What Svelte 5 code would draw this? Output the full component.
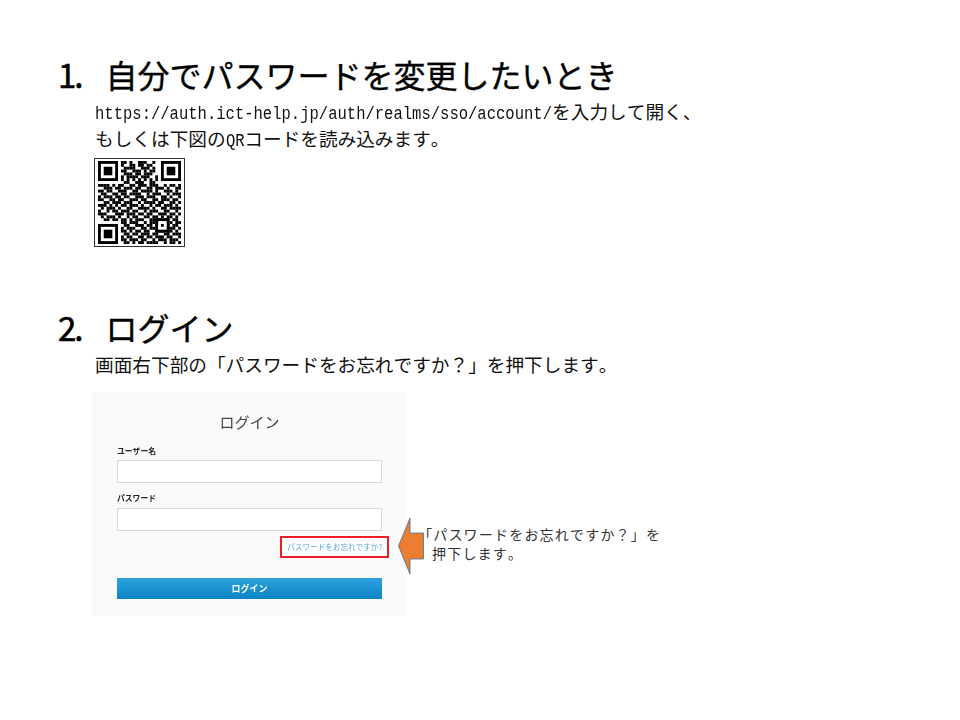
<script>
  const raw = [
    "00000000110100111001000000000",
    "00000000100110110110000000000",
    "00000000011110011101000000000",
    "00000000110011101011000000000",
    "00000000011101101110000000000",
    "00000000101111011100100000000",
    "00000000101010101010100000000",
    "00000000011001110011000000000",
    "11110101100110111011100101101",
    "00111011011101100110111010011",
    "11011001110011011110100111010",
    "01100110110111100101110010111",
    "10111011011001110111001101001",
    "11001101100111011001101110110",
    "00110111011100101111011001101",
    "11101010110111010010110111010",
    "01011101001100111101001101111",
    "10010110111011001011100110010",
    "11100011101110110110011101101",
    "01011101001011001101101011010",
    "00110110110101110011110110110",
    "00000000110111001011011001011",
    "00000000011001110110110110110",
    "00000000101110011011010011101",
    "00000000110101101100111011010",
    "00000000011011011101100110111",
    "00000000101100110110111011001",
    "00000000110111011001011101110",
    "00000000011010110111100101101"
  ];
  const finders = [[0, 0], [22, 0], [0, 22]];
  const cells = [];
  raw.forEach((row, y) => {
    [...row].forEach((c, x) => {
      if (c === "1") cells.push({ x, y });
    });
  });
</script>

<div class="page">
  <section class="first">
    <h1><span class="num">1.</span>自分でパスワードを変更したいとき</h1>
    <div class="body">
      <p><span class="latin url">https://auth.ict-help.jp/auth/realms/sso/account/</span>を入力して開く、</p>
      <p>もしくは下図の<span class="latin code">QR</span>コードを読み込みます。</p>
      <div class="qr">
        <svg width="83" height="83" viewBox="0 0 29 29">
          {#each cells as c}
            <rect x={c.x} y={c.y} width="1.02" height="1.02" fill="#000" />
          {/each}
          {#each finders as f}
            <rect x={f[0] - (f[0] ? 1 : 0)} y={f[1] - (f[1] ? 1 : 0)} width="8" height="8" fill="#fff" />
            <rect x={f[0]} y={f[1]} width="7" height="7" fill="#000" />
            <rect x={f[0] + 1} y={f[1] + 1} width="5" height="5" fill="#fff" />
            <rect x={f[0] + 2} y={f[1] + 2} width="3" height="3" fill="#000" />
          {/each}
          <rect x="20" y="20" width="5" height="5" fill="#000" />
          <rect x="21" y="21" width="3" height="3" fill="#fff" />
          <rect x="22" y="22" width="1" height="1" fill="#000" />
        </svg>
      </div>
    </div>
  </section>

  <section class="second">
    <h1><span class="num">2.</span>ログイン</h1>
    <div class="body">
      <p>画面右下部の「パスワードをお忘れですか？」を押下します。</p>
    </div>
    <div class="figure">
      <div class="shot">
        <div class="title">ログイン</div>
        <div class="label">ユーザー名</div>
        <div class="input"></div>
        <div class="label second-label">パスワード</div>
        <div class="input"></div>
        <div class="forgot-row">
          <div class="forgot">パスワードをお忘れですか?</div>
        </div>
        <div class="button">ログイン</div>
      </div>
      <svg class="arrow" width="28" height="60" viewBox="0 0 28 60">
        <path d="M1.5 29 L13 1 L13 16 L26.5 16 L26.5 42 L13 42 L13 57 Z" fill="#ed7d31" stroke="#41719c" stroke-width="0.8" />
      </svg>
      <div class="note">
        <div>「パスワードをお忘れですか？」を</div>
        <div class="indent">押下します。</div>
      </div>
    </div>
  </section>
</div>

<style>
  :global(body) {
    margin: 0;
    background: #fff;
  }
  .page {
    width: 960px;
    height: 720px;
    box-sizing: border-box;
    padding: 54px 0 0 58px;
    overflow: hidden;
    color: #000;
    font-family: "Noto Sans CJK JP", "Liberation Sans", sans-serif;
    font-kerning: none;
  }
  h1 {
    margin: 0;
    display: flex;
    font-size: 32px;
    line-height: 40px;
    font-weight: 400;
    color: #000;
    -webkit-text-stroke: 0.35px #000;
  }
  .num {
    width: 47.5px;
    font-size: 33px;
    letter-spacing: -2px;
    -webkit-text-stroke: 0.6px #000;
  }
  .body {
    margin: 3px 0 0 37px;
  }
  p {
    margin: 0;
    font-size: 18.67px;
    line-height: 27px;
    white-space: nowrap;
    color: #111;
  }
  .latin {
    display: inline-block;
    font-family: "Liberation Mono", monospace;
    line-height: 1;
    transform: scaleX(0.833);
    transform-origin: left;
  }
  .url {
    margin-right: -91.5px;
  }
  .code {
    margin-right: -3.74px;
  }
  .qr {
    width: 91px;
    height: 89px;
    margin: 7px 0 0 -1px;
    box-sizing: border-box;
    border: 1px solid #333;
    display: flex;
    align-items: center;
    justify-content: center;
  }
  .qr svg {
    filter: blur(0.4px);
  }
  .second {
    margin-top: 60px;
  }
  .figure {
    position: relative;
    margin: 15px 0 0 34px;
    width: 315px;
  }
  .shot {
    width: 315px;
    height: 224px;
    box-sizing: border-box;
    padding: 19px 25px 0;
    background: #fafafa;
    filter: blur(0.4px);
  }
  .title {
    text-align: center;
    font-size: 15px;
    line-height: 22px;
    color: #444;
  }
  .label {
    margin-top: 12px;
    font-size: 7.8px;
    line-height: 12px;
    font-weight: 700;
    color: #222;
  }
  .second-label {
    margin-top: 9px;
  }
  .input {
    margin-top: 3px;
    height: 23px;
    box-sizing: border-box;
    background: #fff;
    border: 1px solid #d9d9d9;
  }
  .second-label + .input {
    margin-top: 4px;
  }
  .forgot-row {
    display: flex;
    justify-content: flex-end;
    margin: 5px -7px 0 0;
  }
  .forgot {
    width: 109px;
    height: 22px;
    box-sizing: border-box;
    border: 2px solid #ee1c25;
    background: #fff;
    padding-right: 5px;
    text-align: right;
    font-size: 7.6px;
    line-height: 18px;
    color: #5aa8dc;
    white-space: nowrap;
  }
  .button {
    margin-top: 20px;
    height: 21px;
    background: linear-gradient(#2fa3dc, #0a83c6);
    text-align: center;
    font-size: 9px;
    line-height: 21px;
    font-weight: 700;
    color: #fff;
  }
  .arrow {
    position: absolute;
    left: 305px;
    top: 125px;
  }
  .note {
    position: absolute;
    left: 326px;
    top: 133px;
    font-size: 14px;
    line-height: 19px;
    letter-spacing: 1.2px;
    color: #333;
    white-space: nowrap;
  }
  .indent {
    padding-left: 14px;
  }
</style>
